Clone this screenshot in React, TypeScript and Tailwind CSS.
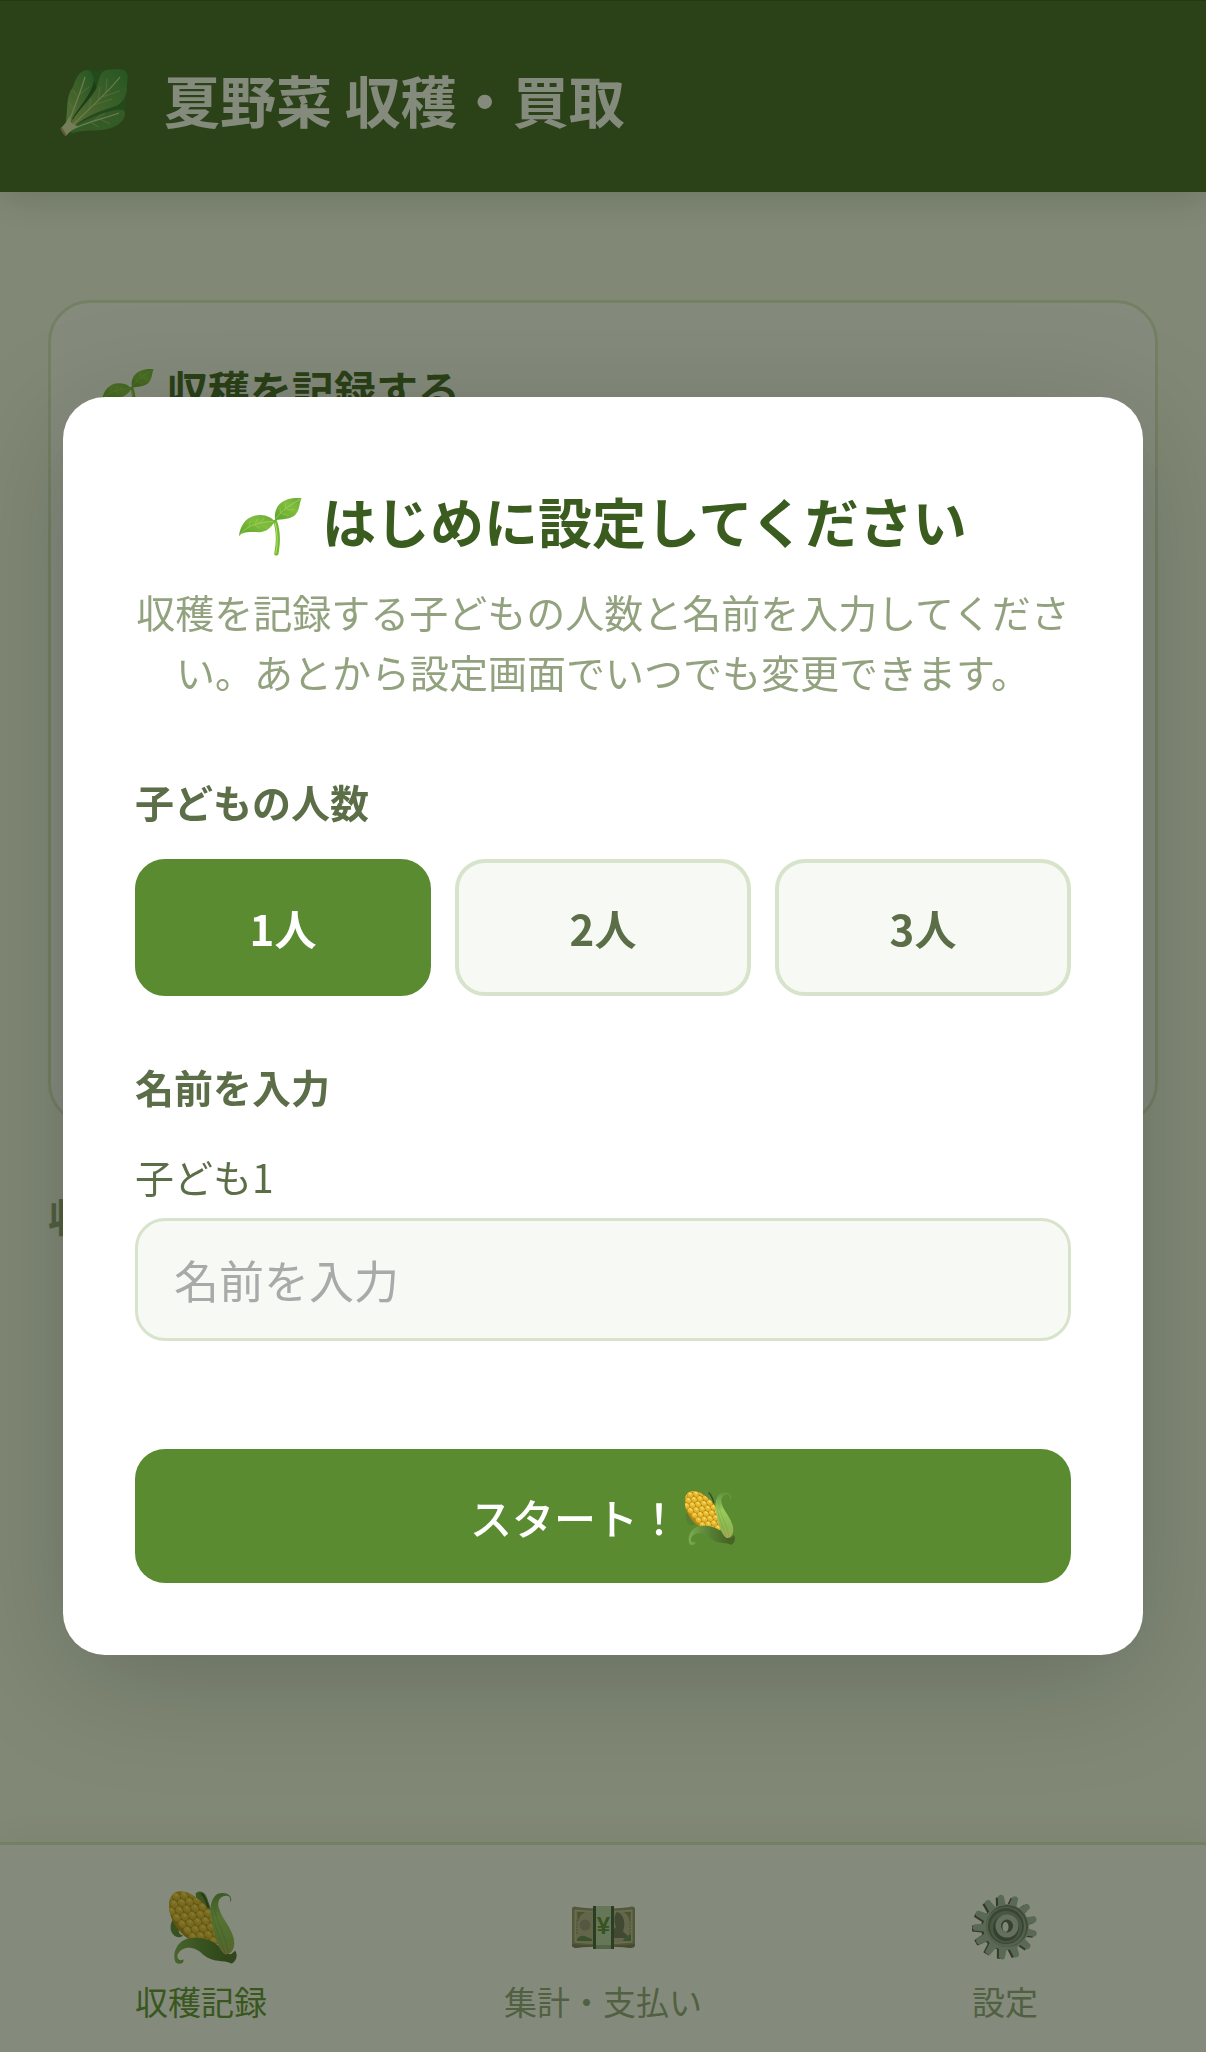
import { useState } from "react";

const counts = [1, 2, 3];

const kernels = Array.from({ length: 9 }, (_, row) =>
  Array.from({ length: 6 }, (_, col) => ({
    x: row * 25 + (col % 2) * 12,
    y: col * 20,
  }))
).flat();

const teeth = Array.from({ length: 13 }, (_, i) => (i * 360) / 13 - 8);

function CornIcon({ id, className }: { id: string; className: string }) {
  return (
    <svg viewBox="0 0 204 218" className={className} aria-hidden="true">
      <defs>
        <linearGradient id={`${id}-cob`} x1="0" y1="0" x2="1" y2="1">
          <stop offset="0" stopColor="#f6d548" />
          <stop offset="1" stopColor="#dba520" />
        </linearGradient>
        <linearGradient id={`${id}-leaf`} x1="0" y1="0" x2="0" y2="1">
          <stop offset="0" stopColor="#5e9140" />
          <stop offset="0.4" stopColor="#9acb5c" />
          <stop offset="0.75" stopColor="#8db852" />
          <stop offset="1" stopColor="#a9a955" />
        </linearGradient>
        <linearGradient id={`${id}-low`} x1="0" y1="0" x2="1" y2="0">
          <stop offset="0" stopColor="#7aab50" />
          <stop offset="0.5" stopColor="#567f33" />
          <stop offset="1" stopColor="#3f5f22" />
        </linearGradient>
        <clipPath id={`${id}-clip`}>
          <path d="M0 45C0 12 16 0 35 0c22 0 40 14 62 31 22 16 33 42 40 69l17 60-92-15C25 122 0 80 0 45Z" />
        </clipPath>
      </defs>
      <path d="M80 6c14-10 27-4 34 14l14 40-46-32Z" fill="#5f8a3a" />
      <path d="M96 6c10 8 16 20 22 44" fill="none" stroke="#324f18" strokeWidth="6" />
      <path
        d="M12 84C0 104 2 126 22 137c8 3 16 1 20-5-10-1-14-8-12-17l26 28Z"
        fill="#547f35"
      />
      <g clipPath={`url(#${id}-clip)`}>
        <rect width="204" height="218" fill="#b9860f" />
        <g transform="translate(18 -48) rotate(50)">
          {kernels.map((k) => (
            <g key={`${k.x}-${k.y}`}>
              <ellipse cx={k.x + 14} cy={k.y - 22} rx="12" ry="10" fill={`url(#${id}-cob)`} />
              <ellipse cx={k.x + 11} cy={k.y - 25} rx="5" ry="3" fill="#fff0a0" opacity="0.5" />
            </g>
          ))}
          {kernels.map((k) => (
            <ellipse
              key={`b${k.x}-${k.y}`}
              cx={k.x + 14}
              cy={k.y - 142}
              rx="12"
              ry="10"
              fill={`url(#${id}-cob)`}
            />
          ))}
        </g>
      </g>
      <path
        d="M20 214C8 190 22 150 58 142c44-8 88 8 108 44 26 2 36 14 20 30-22-10-54 0-84-26-24-26-62-28-76 0-4 14 8 22 17 14 4 12-12 18-23 10Z"
        fill={`url(#${id}-low)`}
      />
      <path
        d="M182 32c4-10 2-18-12-18-20 2-26 20-20 38 10 34 46 66 46 104 0 20-12 34-26 34-22-10-34-62-42-96-8-38-4-72 18-86 20-8 46 2 40 22Z"
        fill={`url(#${id}-leaf)`}
      />
      <path
        d="M136 44c2 44 34 88 42 140M130 66c6 40 24 78 38 118"
        fill="none"
        stroke="#5e8c36"
        strokeWidth="2"
        opacity="0.6"
      />
      <path d="M170 192c10 2 22-6 28-14 10 14 4 32-10 40-8-8-14-14-18-26Z" fill="#4a6428" />
    </svg>
  );
}

function SproutIcon({ id, className }: { id: string; className: string }) {
  return (
    <svg viewBox="0 0 188 173" className={className} aria-hidden="true">
      <defs>
        <linearGradient id={`${id}-l`} x1="0" y1="1" x2="1" y2="0">
          <stop offset="0" stopColor="#5aa428" />
          <stop offset="0.6" stopColor="#82bd40" />
          <stop offset="1" stopColor="#68ab34" />
        </linearGradient>
      </defs>
      <path d="M101 66c11 30 11 64 4 101 3 7 11 6 13-1 7-42 5-72-6-102Z" fill="#72b82e" />
      <path d="M108 74c7 28 8 60 2 92" fill="none" stroke="#b5e06a" strokeWidth="3" />
      <path
        d="M0 113C4 78 26 50 64 51c20 1 34 8 42 19-10 18-22 30-44 32-28 0-46-4-62 11Z"
        fill={`url(#${id}-l)`}
      />
      <path
        d="M108 66c-4-26 6-50 32-60 14-6 32-7 47-5-8 14-4 32-18 48-14 15-40 14-61 17Z"
        fill={`url(#${id}-l)`}
      />
      <path
        d="M4 108c22-28 58-36 98-38M110 62c16-24 40-40 74-59"
        fill="none"
        stroke="#a9dc5c"
        strokeWidth="2"
      />
      <path
        d="M30 84l4-16M48 76l8-14M66 72l8-12M46 80l16 10M124 46l-2-18M140 32l-2-16M142 34l22 2M128 46l20 6"
        fill="none"
        stroke="#a9dc5c"
        strokeWidth="2"
        opacity="0.7"
      />
    </svg>
  );
}

function LeafyGreenIcon({ className }: { className: string }) {
  return (
    <svg viewBox="0 0 68 68" className={className} aria-hidden="true">
      <defs>
        <linearGradient id="greens" x1="0" y1="1" x2="1" y2="0">
          <stop offset="0" stopColor="#a5c46a" />
          <stop offset="0.45" stopColor="#6ba548" />
          <stop offset="1" stopColor="#2c8a3a" />
        </linearGradient>
      </defs>
      <path
        d="M3 58C7 50 4 34 10 24 16 12 20 3 26 1c6-2 10 2 14 0 6 0 14-2 22-1 6 1 7 6 5 11 1 6-2 10-1 15-2 4 1 8-1 12 0 4-1 7-2 10-5 9-14 12-23 13-12 1-22 1-30 6Z"
        fill="#2a6e2a"
      />
      <path
        d="M6 54c2-16 0-28 7-36C16 8 20 2 26 1c6 0 8 6 8 14-2 16-18 26-25 42Z"
        fill="url(#greens)"
      />
      <path d="M12 50C20 36 30 28 34 12c2 6 4 6 3 12-6 10-14 14-20 26Z" fill="#1d5222" />
      <path
        d="M9 58C16 42 28 34 36 20 40 8 40 3 46 1c6 0 14-2 19 1 5 5 1 12 2 18-1 8-4 12-9 16-8 4-32 8-46 24Z"
        fill="url(#greens)"
      />
      <path d="M10 62c12-12 32-18 46-21 6-1 10 0 9 5-2 8-10 13-22 15-12 1-22 0-30 3Z" fill="#4f9440" />
      <path
        d="M7 60C12 42 20 26 25 8M8 61C24 44 46 26 60 8M9 62c16-9 34-12 50-18"
        fill="none"
        stroke="#cfe0a4"
        strokeWidth="1.2"
      />
      <path
        d="M14 40l-6-7M18 29l-5-8M20 25l9-7M29 40l2-11M38 31l2-13M46 23l1-13M34 36l18-6M42 28l18-6M30 53l9 5M40 50l10 5M34 51l11-7"
        fill="none"
        stroke="#b4d088"
        strokeWidth="0.6"
      />
      <path d="M1 59c4-4 7-8 9-12 0 5 0 8 8 10-5 3-9 6-12 10-3-2-5-5-5-8Z" fill="#dde3b0" />
      <path d="M1 59l5 8" stroke="#b08c68" strokeWidth="2" />
    </svg>
  );
}

function YenIcon({ className }: { className: string }) {
  return (
    <svg viewBox="0 0 65 43" className={className} aria-hidden="true">
      <path d="M1 36h63v3c0 3-3 3-6 3-14-2-38-2-52 0-3 0-5 0-5-3Z" fill="#77735c" />
      <path d="M1 3c0-3 3-3 5-2 16 2 36 2 53 0 3-1 5 0 5 2v35c-18 2-44 2-63 0Z" fill="#938d70" />
      <path d="M4 4c18 2 40 2 57 0v32c-18 2-40 2-57 0Z" fill="#b5ad90" stroke="#d4cfaa" strokeWidth="0.8" />
      <circle cx="14" cy="19" r="5.5" fill="#958f7c" />
      <path d="M46 6c-3 3-3 10-1 15-4 3-4 7-3 11h16c-1-3-4-4-6-7 3-7 1-17-6-19Z" fill="#6d6e5e" />
      <path d="M6 33c5-6 9-2 15 0v2H6ZM54 31l6-3v7h-8Z" fill="#5d8058" />
      <path d="M6 6h8l-5 4-2 6ZM60 6h-7l4 4 2 6Z" fill="#86825f" />
      <path d="M6 14v14M59 14v14" stroke="#86825f" strokeDasharray="2 1" />
      <path d="M22 0h21v43H22Z" fill="#3c5536" />
      <path d="M25 0h15v43H25Z" fill="#bcd2b2" />
      <path d="M25 39h15v4H25Z" fill="#94ac88" />
      <text
        x="32.500"
        y="28"
        textAnchor="middle"
        fontSize="24"
        fontWeight="700"
        fontFamily="Liberation Sans, sans-serif"
        fill="#5a8038"
      >
        ¥
      </text>
    </svg>
  );
}

function GearIcon({ className }: { className: string }) {
  return (
    <svg viewBox="0 0 66 66" className={className} aria-hidden="true">
      <g fill="#4c4a3c">
        {teeth.map((a) => (
          <path key={a} d="M29 12l1-10h6l1 10Z" transform={`translate(-2 1) rotate(${a} 33 33)`} />
        ))}
        <circle cx="31" cy="34" r="22" />
      </g>
      <g fill="#a3b4aa">
        {teeth.map((a) => (
          <path key={a} d="M29 12l1-10q3-3 6 0l1 10Z" transform={`rotate(${a} 33 33)`} />
        ))}
        <circle cx="34" cy="33" r="23" />
      </g>
      <circle cx="35" cy="32" r="21" fill="#66746a" />
      <circle cx="34" cy="33" r="20" fill="#93a398" />
      <circle cx="34" cy="32" r="18" fill="#5a665c" />
      <circle cx="34" cy="33" r="16" fill="#7c8a7e" />
      <circle cx="34" cy="34" r="13" fill="#525c50" />
      <circle cx="35" cy="32" r="11.500" fill="#b4c4ba" />
      <ellipse cx="35" cy="32" rx="6" ry="6.500" fill="#545c50" />
      <ellipse cx="33.500" cy="33" rx="3" ry="5" fill="#f4f6f0" />
    </svg>
  );
}

export default function App() {
  const [count, setCount] = useState(1);
  const [names, setNames] = useState(["", "", ""]);

  const updateName = (index: number, value: string) => {
    setNames((prev) => prev.map((n, i) => (i === index ? value : n)));
  };

  return (
    <div className="flex min-h-screen flex-col bg-[#f8fbf2] font-['Noto_Sans_CJK_JP','Noto_Sans',sans-serif] text-[#5c6e48]">
      <header className="z-10 flex h-48 items-start gap-9 border-t border-[#2b4514] bg-[#3a5c1f] px-15 pt-17 shadow-[0_6px_36px_rgba(0,0,0,0.18)]">
        <LeafyGreenIcon className="size-17 shrink-0" />
        <h1 className="text-[56px] leading-[60px] font-bold text-white">夏野菜 収穫・買取</h1>
      </header>

      <main className="flex-1 px-12 pt-27">
        <section className="h-[825px] rounded-[42px] border-3 border-[#dbe7ca] bg-white px-[51px] pt-14">
          <h2 className="flex items-center gap-3 text-[42px] leading-[60px] font-bold text-[#3a5c1f]">
            <SproutIcon id="card" className="mt-2 h-12 w-[52px] shrink-0" />
            収穫を記録する
          </h2>
        </section>
        <h2 className="mt-15 text-[39px] leading-[60px] font-bold text-[#8fa07c]">収穫</h2>
      </main>

      <nav className="grid h-[210px] grid-cols-3 border-t-3 border-[#dbe7ca] bg-white text-[33px] leading-[48px] text-[#8fa07c] shadow-[0_-6px_36px_rgba(0,0,0,0.06)]">
        <a href="#harvest" className="flex flex-col items-center pt-11 text-[#5a8a30]">
          <span className="flex h-[76px] items-center">
            <CornIcon id="nav-corn" className="ml-1 h-[73px] w-17" />
          </span>
          <span className="mt-3">収穫記録</span>
        </a>
        <a href="#summary" className="flex flex-col items-center pt-11">
          <span className="flex h-[76px] items-center">
            <YenIcon className="h-[43px] w-[65px]" />
          </span>
          <span className="mt-3">集計・支払い</span>
        </a>
        <a href="#settings" className="flex flex-col items-center pt-11">
          <span className="flex h-[76px] items-center">
            <GearIcon className="size-[66px]" />
          </span>
          <span className="mt-3">設定</span>
        </a>
      </nav>

      {/* First-run setup */}
      <div className="fixed inset-0 z-20 flex items-center justify-center bg-[#1f2b10]/55 px-[63px]">
        <form
          role="dialog"
          aria-labelledby="setup-title"
          onSubmit={(e) => e.preventDefault()}
          className="w-full max-w-[1080px] rounded-[42px] bg-white px-18 pt-22 pb-18 shadow-[0_24px_120px_rgba(0,0,0,0.2)]"
        >
          <h2
            id="setup-title"
            className="flex items-center justify-center gap-5 text-[54px] leading-[72px] font-bold text-[#3a5c1f]"
          >
            <SproutIcon id="setup" className="mt-3 h-[58px] w-[63px] shrink-0" />
            はじめに設定してください
          </h2>
          <p className="mt-6 text-center text-[39px] leading-[60px] text-[#93a27e]">
            収穫を記録する子どもの人数と名前を入力してください。あとから設定画面でいつでも変更できます。
          </p>

          <fieldset className="mt-[70px]">
            <legend className="text-[39px] leading-[60px] font-bold">子どもの人数</legend>
            <div className="mt-7 grid grid-cols-3 gap-6">
              {counts.map((n) => (
                <button
                  key={n}
                  type="button"
                  aria-pressed={count === n}
                  onClick={() => setCount(n)}
                  className={`h-[137px] rounded-[30px] border-4 text-[42px] leading-[60px] font-bold ${
                    count === n
                      ? "border-[#5a8b31] bg-[#5a8b31] text-white"
                      : "border-[#d7e4cb] bg-[#f7f9f4]"
                  }`}
                >
                  {n}人
                </button>
              ))}
            </div>
          </fieldset>

          <h3 className="mt-15 text-[39px] leading-[60px] font-bold">名前を入力</h3>
          {names.slice(0, count).map((name, i) => (
            <div key={i} className="mt-[30px]">
              <label htmlFor={`child-${i}`} className="block text-[39px] leading-[60px]">
                子ども{i + 1}
              </label>
              <input
                id={`child-${i}`}
                type="text"
                value={name}
                onChange={(e) => updateName(i, e.target.value)}
                placeholder="名前を入力"
                className="mt-3 block h-[123px] w-full rounded-[30px] border-3 border-[#d7e4cb] bg-[#f7f9f4] px-9 text-[45px] placeholder:text-[#a9a9a9]"
              />
            </div>
          ))}

          <button
            type="submit"
            className="mt-27 flex h-[134px] w-full items-center justify-center rounded-[30px] bg-[#5a8b31] text-[42px] font-medium text-white"
          >
            スタート！
            <CornIcon id="start-corn" className="mt-1 ml-1 h-[54px] w-[52px]" />
          </button>
        </form>
      </div>
    </div>
  );
}
